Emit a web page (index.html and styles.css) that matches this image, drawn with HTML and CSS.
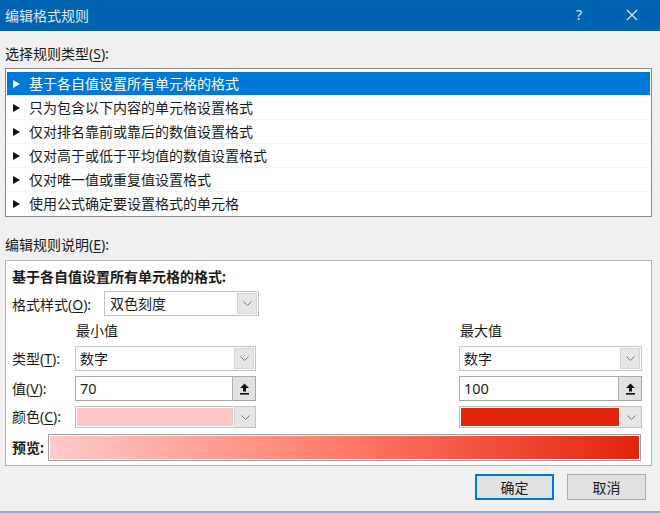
FILE: index.html
```html
<!DOCTYPE html>
<html lang="zh-CN">

<head>
    <meta charset="UTF-8">
    <title>编辑格式规则</title>
    <link rel="stylesheet" href="styles.css">
</head>

<body>
    <div class="dialog">
        <div class="titlebar">
            <span class="title">编辑格式规则</span>
            <span class="help">?</span>
            <span class="close">
                <svg width="12" height="12" viewBox="0 0 12 12">
                    <path d="M1 1 L11 11 M11 1 L1 11" stroke="#e4edf7" stroke-width="1.2" fill="none"/>
                </svg>
            </span>
        </div>

        <div class="content">
            <div class="sec-label first">选择规则类型(<u>S</u>):</div>
            <ul class="rule-list">
                <li class="selected">基于各自值设置所有单元格的格式</li>
                <li>只为包含以下内容的单元格设置格式</li>
                <li>仅对排名靠前或靠后的数值设置格式</li>
                <li>仅对高于或低于平均值的数值设置格式</li>
                <li>仅对唯一值或重复值设置格式</li>
                <li>使用公式确定要设置格式的单元格</li>
            </ul>

            <div class="sec-label second">编辑规则说明(<u>E</u>):</div>
            <div class="desc">
                <div class="desc-head">基于各自值设置所有单元格的格式:</div>

                <div class="style-row">
                    <span class="style-label">格式样式(<u>O</u>):</span>
                    <div class="combo style-combo">
                        <span class="combo-text">双色刻度</span>
                        <span class="drop"><svg width="9" height="5" viewBox="0 0 9 5"><path d="M0.5 0.5 L4.5 4.5 L8.5 0.5" stroke="#7a7a7a" fill="none"/></svg></span>
                    </div>
                </div>

                <div class="scale-grid">
                    <span></span>
                    <span class="col-head">最小值</span>
                    <span></span>
                    <span class="col-head">最大值</span>

                    <span class="row-label">类型(<u>T</u>):</span>
                    <div class="combo">
                        <span class="combo-text">数字</span>
                        <span class="drop"><svg width="9" height="5" viewBox="0 0 9 5"><path d="M0.5 0.5 L4.5 4.5 L8.5 0.5" stroke="#7a7a7a" fill="none"/></svg></span>
                    </div>
                    <span></span>
                    <div class="combo">
                        <span class="combo-text">数字</span>
                        <span class="drop"><svg width="9" height="5" viewBox="0 0 9 5"><path d="M0.5 0.5 L4.5 4.5 L8.5 0.5" stroke="#7a7a7a" fill="none"/></svg></span>
                    </div>

                    <span class="row-label">值(<u>V</u>):</span>
                    <div class="value-box">
                        <span class="value-text">70</span>
                        <span class="pick"><svg width="11" height="12" viewBox="0 0 11 12"><path d="M5.5 0.5 L10 5 L7 5 L7 8.5 L4 8.5 L4 5 L1 5 Z" fill="#111"/><rect x="1" y="10" width="9" height="1.6" fill="#111"/></svg></span>
                    </div>
                    <span></span>
                    <div class="value-box">
                        <span class="value-text">100</span>
                        <span class="pick"><svg width="11" height="12" viewBox="0 0 11 12"><path d="M5.5 0.5 L10 5 L7 5 L7 8.5 L4 8.5 L4 5 L1 5 Z" fill="#111"/><rect x="1" y="10" width="9" height="1.6" fill="#111"/></svg></span>
                    </div>

                    <span class="row-label">颜色(<u>C</u>):</span>
                    <div class="combo color-combo">
                        <span class="swatch min-color"></span>
                        <span class="drop"><svg width="9" height="5" viewBox="0 0 9 5"><path d="M0.5 0.5 L4.5 4.5 L8.5 0.5" stroke="#7a7a7a" fill="none"/></svg></span>
                    </div>
                    <span></span>
                    <div class="combo color-combo">
                        <span class="swatch max-color"></span>
                        <span class="drop"><svg width="9" height="5" viewBox="0 0 9 5"><path d="M0.5 0.5 L4.5 4.5 L8.5 0.5" stroke="#7a7a7a" fill="none"/></svg></span>
                    </div>
                </div>

                <div class="preview-row">
                    <span class="preview-label">预览:</span>
                    <div class="preview-bar"><div class="preview-fill"></div></div>
                </div>
            </div>

            <div class="actions">
                <button class="btn default">确定</button>
                <button class="btn">取消</button>
            </div>
        </div>
    </div>
</body>

</html>
```

FILE: styles.css
```css
body {
    margin: 0;
    font-family: "Noto Sans", "Noto Sans CJK SC", sans-serif;
    font-size: 14px;
    color: #1b1b1b;
    background-color: #f0f0f0;
}

u {
    text-decoration-thickness: 1px;
    text-underline-offset: 2px;
}

.dialog {
    height: 511px;
    background-color: #f0f0f0;
    border-bottom: 2px solid #86b0dc;
}

/* 标题栏 */
.titlebar {
    height: 31px;
    background-color: #0063b1;
    color: #dde8f4;
    display: flex;
    align-items: center;
    padding-left: 5px;
}

.title {
    flex: 1;
    font-family: "Noto Sans CJK SC", sans-serif;
    line-height: 20px;
    margin-top: -2px;
}

.help {
    width: 14px;
    margin-right: 36px;
    margin-top: -2px;
}

.close {
    display: flex;
    margin-right: 22px;
    margin-top: -2px;
}

.content {
    padding: 0 8px 0 5px;
}

.sec-label {
    line-height: 20px;
}

.sec-label.first {
    margin-top: 13px;
}

.sec-label.second {
    margin-top: 18px;
}

/* 规则类型列表 */
.rule-list {
    list-style: none;
    margin: 4px 0 0;
    padding: 3px 1px 0;
    background: white;
    border: 1px solid #8a8a8a;
}

.rule-list li {
    height: 24px;
    line-height: 24px;
    padding-left: 6px;
    border-bottom: 1px solid #f3f3f3;
    box-sizing: border-box;
    display: flex;
    align-items: center;
}

.rule-list li:last-child {
    border-bottom: none;
}

.rule-list li::before {
    content: "";
    border-left: 7px solid #111;
    border-top: 4px solid transparent;
    border-bottom: 4px solid transparent;
    margin-right: 9px;
}

.rule-list li.selected {
    background-color: #0078d7;
    color: white;
}

.rule-list li.selected::before {
    border-left-color: white;
}

/* 规则说明 */
.desc {
    margin-top: 5px;
    background: white;
    border: 1px solid #b5b5b5;
    padding: 6px 9px 4px 6px;
}

.desc-head {
    font-weight: bold;
    line-height: 20px;
}

.style-row {
    display: flex;
    align-items: center;
    margin-top: 4px;
}

.style-label {
    width: 92px;
}

.combo {
    height: 25px;
    box-sizing: border-box;
    border: 1px solid #c4c4c4;
    background: white;
    display: flex;
    align-items: stretch;
}

.style-combo {
    width: 155px;
}

.combo-text {
    flex: 1;
    line-height: 23px;
    padding-left: 5px;
}

.drop {
    width: 18px;
    margin: 1px;
    background: #e6e6e6;
    border: 1px solid #d6d6d6;
    display: flex;
    align-items: center;
    justify-content: center;
}

.scale-grid {
    display: grid;
    grid-template-columns: 63px 181px 203px 183px;
    grid-template-rows: 20px 25px 25px 22px;
    row-gap: 5px;
    margin-top: 5px;
    align-items: center;
    line-height: 20px;
}

.scale-grid > .combo,
.scale-grid > .value-box {
    align-self: stretch;
}

.col-head {
    padding-left: 1px;
}

.scale-grid .combo-text {
    padding-left: 4px;
}

.value-box {
    box-sizing: border-box;
    border: 1px solid #a9a9a9;
    display: flex;
    background: white;
}

.value-text {
    flex: 1;
    line-height: 23px;
    padding-left: 4px;
    font-size: 14.5px;
}

.pick {
    width: 22px;
    background: #e1e1e1;
    border-left: 1px solid #adadad;
    display: flex;
    align-items: center;
    justify-content: center;
}

.color-combo {
    height: 22px;
}

.swatch {
    flex: 1;
    margin: 1px;
}

.min-color {
    background: #ffc8c8;
}

.max-color {
    background: #e2240c;
}

.color-combo .drop {
    width: 20px;
    margin: 0;
    border-top: none;
    border-bottom: none;
    border-right: none;
}

/* 预览 */
.preview-row {
    display: flex;
    align-items: center;
    margin-top: 6px;
    line-height: 20px;
}

.preview-label {
    width: 36px;
    font-weight: bold;
}

.preview-bar {
    width: 593px;
    height: 27px;
    box-sizing: border-box;
    border: 1px solid #a0a0a0;
    padding: 1px;
    background: white;
}

.preview-fill {
    height: 100%;
    background: linear-gradient(to right, #ffcaca, #ff7a68 50%, #e2240c);
}

/* 按钮 */
.actions {
    display: flex;
    justify-content: flex-end;
    gap: 13px;
    margin-top: 8px;
    padding-right: 6px;
}

.btn {
    width: 79px;
    height: 26px;
    font-family: "Noto Sans CJK SC", sans-serif;
    font-size: 14px;
    background: #e1e1e1;
    border: 1px solid #adadad;
    color: #1b1b1b;
    padding: 0;
}

.btn.default {
    border: 2px solid #0078d7;
}
```
